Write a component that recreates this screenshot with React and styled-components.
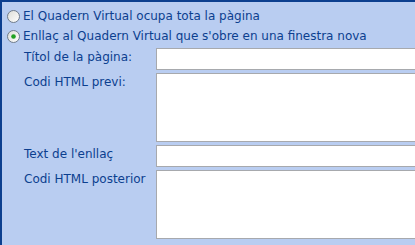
import styled, { createGlobalStyle } from 'styled-components'

const GlobalStyle = createGlobalStyle`
  html, body {
    margin: 0;
    padding: 0;
    background: #b9cdf1;
    overflow: hidden;
  }
`

const Panel = styled.div`
  width: 415px;
  height: 245px;
  box-sizing: border-box;
  background: #b9cdf1;
  border-top: 2px solid #0c3f8f;
  border-left: 2px solid #0c3f8f;
  padding: 4px 0 0 5px;
  font-family: 'DejaVu Sans', Verdana, sans-serif;
  font-size: 12px;
  color: #0c3f8f;
  overflow: hidden;
`

const Option = styled.label`
  display: flex;
  align-items: center;
  gap: 3px;
  height: 20px;
  white-space: nowrap;
  cursor: pointer;
`

const Fields = styled.div`
  display: grid;
  grid-template-columns: 132px 300px;
  row-gap: 3px;
  margin: 2px 0 0 17px;
`

const Label = styled.div`
  padding-top: 2px;
  line-height: 15px;
  white-space: nowrap;
`

const Input = styled.div`
  box-sizing: border-box;
  height: ${p => (p.$tall ? 69 : 22)}px;
  background: #fff;
  border: 1px solid #a7a9ad;
`

function Radio({ checked }) {
  return (
    <svg width="13" height="13" viewBox="0 0 13 13">
      <defs>
        <linearGradient id="rg" x1="0" y1="0" x2="1" y2="1">
          <stop offset="0" stopColor="#dcdcd6" />
          <stop offset="1" stopColor="#ffffff" />
        </linearGradient>
      </defs>
      <circle cx="6.5" cy="6.5" r="6" fill="url(#rg)" stroke="#6e7a8a" strokeWidth="1" />
      {checked && <circle cx="6.5" cy="6.5" r="2.3" fill="#21a121" />}
    </svg>
  )
}

export default function App() {
  return (
    <>
      <GlobalStyle />
      <Panel>
        <Option><Radio /> El Quadern Virtual ocupa tota la pàgina</Option>
        <Option><Radio checked /> Enllaç al Quadern Virtual que s'obre en una finestra nova</Option>
        <Fields>
          <Label>Títol de la pàgina:</Label>
          <Input />
          <Label>Codi HTML previ:</Label>
          <Input $tall />
          <Label>Text de l'enllaç</Label>
          <Input />
          <Label>Codi HTML posterior</Label>
          <Input $tall />
        </Fields>
      </Panel>
    </>
  )
}
